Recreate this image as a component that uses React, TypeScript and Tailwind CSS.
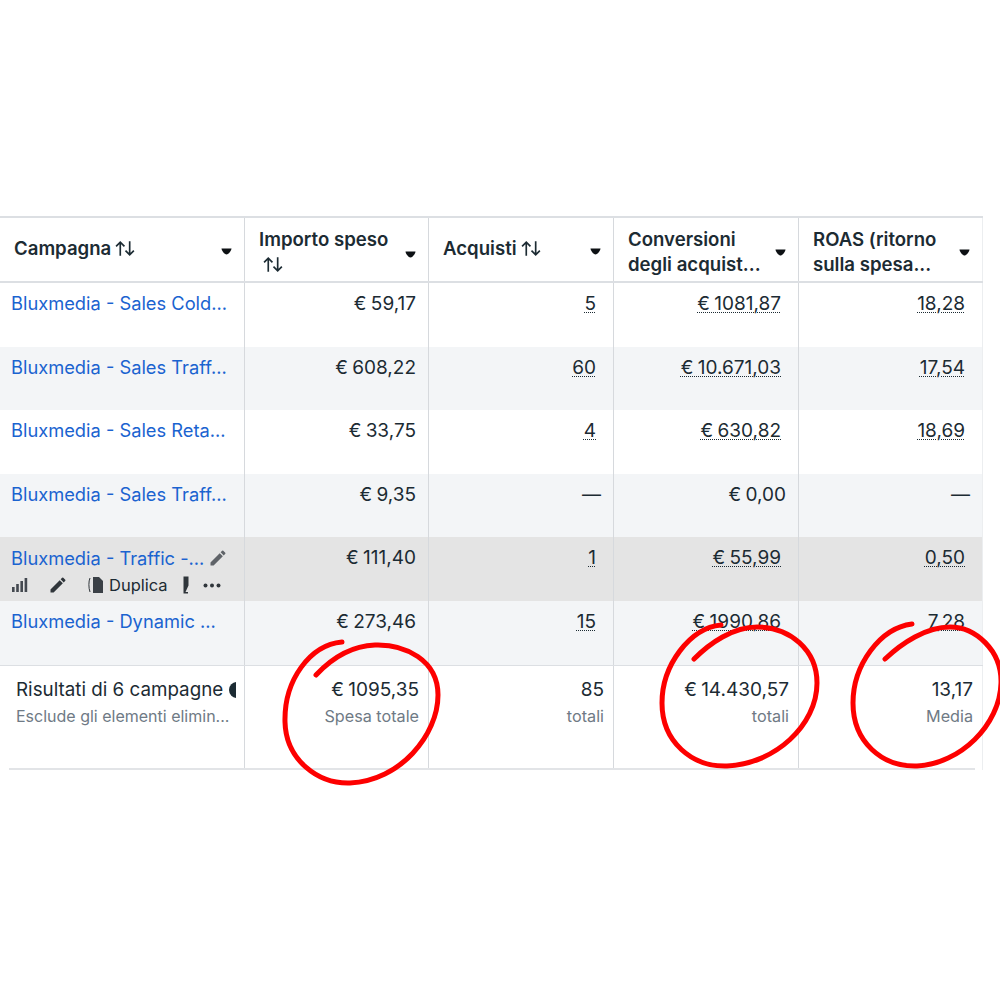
import React from 'react';
import { MdEdit } from 'react-icons/md';

const gridCols = 'grid grid-cols-[245px_184px_185px_185px_184px]';
const border = 'border-r border-[#d6d9dd] nth-5:border-[#eceef0]';

interface RowData {
  name: string;
  spend: string;
  purchases: string;
  value: string;
  roas: string;
}

const rows: RowData[] = [
  { name: 'Bluxmedia - Sales Cold...', spend: '€ 59,17', purchases: '5', value: '€ 1081,87', roas: '18,28' },
  { name: 'Bluxmedia - Sales Traff...', spend: '€ 608,22', purchases: '60', value: '€ 10.671,03', roas: '17,54' },
  { name: 'Bluxmedia - Sales Reta...', spend: '€ 33,75', purchases: '4', value: '€ 630,82', roas: '18,69' },
  { name: 'Bluxmedia - Sales Traff...', spend: '€ 9,35', purchases: '—', value: '€ 0,00', roas: '—' },
  { name: 'Bluxmedia - Traffic -...', spend: '€ 111,40', purchases: '1', value: '€ 55,99', roas: '0,50' },
  { name: 'Bluxmedia - Dynamic ...', spend: '€ 273,46', purchases: '15', value: '€ 1990,86', roas: '7,28' },
];

const SortArrows = () => (
  <svg width="23" height="19" viewBox="0 0 22 18" fill="none" stroke="#1c2b33" strokeWidth="1.6" className="shrink-0">
    <path d="M6 16V3M2 7l4-4 4 4M15 2v13M11 11l4 4 4-4" />
  </svg>
);

const Caret = () => (
  <svg width="11" height="7" viewBox="0 0 11 7" className="shrink-0">
    <path d="M0.5 0.5h10c0 2-3 6-5 6s-5-4-5-6z" fill="#0d1114" />
  </svg>
);

const HeaderCell = ({ children, caretTop = 'mt-[3px]' }: { children: React.ReactNode; caretTop?: string }) => (
  <div className={`${border} flex items-center justify-between pl-[14px] pr-[12px]`}>
    <div className="text-[18.600px] leading-[25px] font-semibold text-[#1c2b33] whitespace-nowrap">{children}</div>
    <span className={caretTop}><Caret /></span>
  </div>
);

const NumCell = ({ text, plain = false }: { text: string; plain?: boolean }) => {
  const isPlain = plain || text === '—' || text === '€ 0,00';
  return (
    <div className={`${border} pt-[9px] text-right text-[19px] [word-spacing:-1px] ${isPlain ? 'pr-3' : 'pr-[17px]'}`}>
      <span className={isPlain ? '' : 'underline decoration-dotted decoration-1 underline-offset-[2px]'}>{text}</span>
    </div>
  );
};

const RowActions = () => (
  <div className="flex items-center h-5 mt-[5px] text-[#1c2b33]">
    <svg width="17" height="16" viewBox="0 0 17 16" fill="#444950" className="shrink-0">
      <rect x="1" y="10" width="2.6" height="5" />
      <rect x="5.2" y="7" width="2.6" height="8" />
      <rect x="9.4" y="4" width="2.6" height="11" />
      <rect x="13.6" y="1" width="2.6" height="14" />
    </svg>
    <MdEdit size={20} className="ml-[20px] text-[#30363b] shrink-0" />
    <svg width="17" height="18" viewBox="0 0 17 18" className="ml-[19px] shrink-0">
      <path d="M3 2C1.5 5 1.5 12 3 16" fill="none" stroke="#30363b" strokeWidth="1" />
      <path d="M6 1h6l4 4v12H6z" fill="#3a4046" />
    </svg>
    <span className="ml-[5px] text-[16.500px]">Duplica</span>
    <svg width="6" height="18" viewBox="0 0 6 18" className="ml-[15px] shrink-0">
      <path d="M0.5 0.5h5v9l-3 6.500h2.500v1.500h-4.500z" fill="#30363b" />
    </svg>
    <svg width="18" height="5" viewBox="0 0 18 5" fill="#30363b" className="ml-[14px] shrink-0">
      <circle cx="2.500" cy="2.500" r="2" />
      <circle cx="9" cy="2.500" r="2" />
      <circle cx="15.500" cy="2.500" r="2" />
    </svg>
  </div>
);

const Row = ({ row, index }: { row: RowData; index: number }) => {
  const hovered = index === 4;
  const bg = hovered ? 'bg-[#e4e4e4]' : index % 2 === 1 ? 'bg-[#f3f5f7]' : 'bg-white';
  return (
    <div className={`${gridCols} ${bg} h-[63.600px] text-[18.300px] leading-6 text-[#1c2b33]`}>
      <div className={`${border} pl-[11px] pr-[16px] ${hovered ? 'pt-[9px]' : 'pt-[8px]'}`}>
        {hovered ? (
          <>
            <div className="flex items-center justify-between">
              <span className="whitespace-nowrap text-[#1a63d0]">{row.name}</span>
              <MdEdit size={20} className="text-[#5f6368] shrink-0" />
            </div>
            <RowActions />
          </>
        ) : (
          <div className="whitespace-nowrap text-[#1a63d0]">{row.name}</div>
        )}
      </div>
      <NumCell text={row.spend} plain />
      <NumCell text={row.purchases} />
      <NumCell text={row.value} />
      <NumCell text={row.roas} />
    </div>
  );
};

const TotalCell = ({ value, label }: { value: string; label: string }) => (
  <div className={`${border} pt-[12px] pr-[9px] text-right`}>
    <div className="text-[19px] leading-6 text-[#1c2b33] [word-spacing:-1px]">{value}</div>
    <div className="mt-[2px] text-[16.200px] leading-6 text-[#6f7a85]">{label}</div>
  </div>
);

const Circles = () => (
  <svg width="1000" height="1000" viewBox="0 0 1000 1000" fill="none" stroke="#fd0000" strokeWidth="5" strokeLinecap="round" className="absolute left-0 top-0 pointer-events-none">
    <path d="M342 642C310 645 284 680 285 722C286 760 318 784 350 783C400 781 438 735 438 695C438 660 405 644 375 645C350 646 330 660 316 675" />
    <path d="M721 625C690 628 662 665 662 703C662 742 692 767 727 766C775 764 817 725 817 683C817 650 790 627 757 627C733 627 710 643 694 659" />
    <path d="M912 624C880 628 853 665 853 703C853 742 882 767 917 766C960 764 1000 725 1001 683C1002 650 975 627 950 627C926 627 902 643 885 659" />
  </svg>
);

export default function App() {
  return (
    <div className="relative h-[1000px] w-[1000px] overflow-hidden bg-white pt-[216px] font-['Inter',sans-serif]">
      <div className="w-[983px]">
        <div className={`${gridCols} h-[67px] border-y-2 border-[#dcdfe3] bg-white`}>
          <HeaderCell>
            <span className="flex items-center gap-[3px] -mt-[3px]">Campagna <SortArrows /></span>
          </HeaderCell>
          <HeaderCell caretTop="mt-[9px]">
            <div className="mt-[5px]">Importo speso</div>
            <div className="pl-[3px] h-[25px] flex items-center"><SortArrows /></div>
          </HeaderCell>
          <HeaderCell>
            <span className="flex items-center gap-[3px] -mt-[3px]">Acquisti <SortArrows /></span>
          </HeaderCell>
          <HeaderCell caretTop="mt-[5px]">
            <div className="mt-[5px]">Conversioni<br />degli acquist...</div>
          </HeaderCell>
          <HeaderCell caretTop="mt-[5px]">
            <div className="mt-[5px]">ROAS (ritorno<br />sulla spesa...</div>
          </HeaderCell>
        </div>

        {rows.map((row, i) => (
          <Row key={i} row={row} index={i} />
        ))}

        <div className={`${gridCols} h-[105px] border-t border-[#dcdfe3] bg-white relative`}>
          <div className={`${border} pl-[16px] pr-[8px] pt-[12px]`}>
            <div className="flex items-center overflow-hidden text-[18.800px] leading-6 text-[#1c2b33]">
              <span className="whitespace-nowrap">Risultati di 6 campagne</span>
              <span className="ml-[6px] h-[16px] w-[8px] shrink-0 rounded-l-full bg-[#1c2b33]" />
            </div>
            <div className="mt-[2px] whitespace-nowrap text-[16px] leading-6 text-[#6f7a85]">Esclude gli elementi elimin...</div>
          </div>
          <TotalCell value="€ 1095,35" label="Spesa totale" />
          <TotalCell value="85" label="totali" />
          <TotalCell value="€ 14.430,57" label="totali" />
          <TotalCell value="13,17" label="Media" />
          <div className="absolute bottom-0 left-[9px] right-[8px] h-[2px] bg-[#e2e4e7]" />
        </div>
      </div>
      <Circles />
    </div>
  );
}
